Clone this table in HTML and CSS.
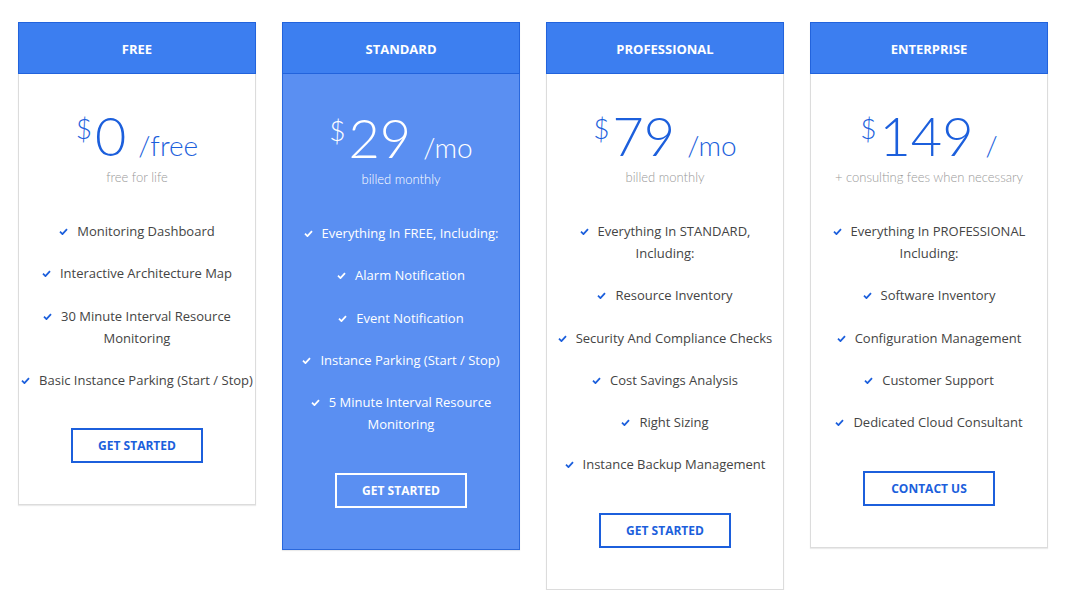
FILE: index.html
```html
<!DOCTYPE html>
<html lang="en">
<head>
<meta charset="UTF-8" />
<meta name="viewport" content="width=device-width, initial-scale=1" />
<title>Pricing</title>
<link rel="stylesheet" href="styles.css">
</head>
<body>

  <div class="plans">

    <div class="plan">
      <div class="plan-head">FREE</div>
      <div class="plan-body">
        <div class="price"><span class="currency">$</span><span class="amount">0</span><span class="period">/free</span></div>
        <div class="price-note">free for life</div>
        <ul class="features">
          <li><svg class="check" viewBox="0 0 10 8"><path d="M1 4.2 L3.8 7 L9 1.2"/></svg>Monitoring Dashboard</li>
          <li><svg class="check" viewBox="0 0 10 8"><path d="M1 4.2 L3.8 7 L9 1.2"/></svg>Interactive Architecture Map</li>
          <li><svg class="check" viewBox="0 0 10 8"><path d="M1 4.2 L3.8 7 L9 1.2"/></svg>30 Minute Interval Resource Monitoring</li>
          <li><svg class="check" viewBox="0 0 10 8"><path d="M1 4.2 L3.8 7 L9 1.2"/></svg>Basic Instance Parking (Start / Stop)</li>
        </ul>
        <a href="#" class="plan-btn">Get Started</a>
      </div>
    </div>

    <div class="plan featured">
      <div class="plan-head">STANDARD</div>
      <div class="plan-body">
        <div class="price"><span class="currency">$</span><span class="amount">29</span><span class="period">/mo</span></div>
        <div class="price-note">billed monthly</div>
        <ul class="features">
          <li><svg class="check" viewBox="0 0 10 8"><path d="M1 4.2 L3.8 7 L9 1.2"/></svg>Everything In FREE, Including:</li>
          <li><svg class="check" viewBox="0 0 10 8"><path d="M1 4.2 L3.8 7 L9 1.2"/></svg>Alarm Notification</li>
          <li><svg class="check" viewBox="0 0 10 8"><path d="M1 4.2 L3.8 7 L9 1.2"/></svg>Event Notification</li>
          <li><svg class="check" viewBox="0 0 10 8"><path d="M1 4.2 L3.8 7 L9 1.2"/></svg>Instance Parking (Start / Stop)</li>
          <li><svg class="check" viewBox="0 0 10 8"><path d="M1 4.2 L3.8 7 L9 1.2"/></svg>5 Minute Interval Resource Monitoring</li>
        </ul>
        <a href="#" class="plan-btn">Get Started</a>
      </div>
    </div>

    <div class="plan">
      <div class="plan-head">PROFESSIONAL</div>
      <div class="plan-body">
        <div class="price"><span class="currency">$</span><span class="amount">79</span><span class="period">/mo</span></div>
        <div class="price-note">billed monthly</div>
        <ul class="features">
          <li><svg class="check" viewBox="0 0 10 8"><path d="M1 4.2 L3.8 7 L9 1.2"/></svg>Everything In STANDARD,<br>Including:</li>
          <li><svg class="check" viewBox="0 0 10 8"><path d="M1 4.2 L3.8 7 L9 1.2"/></svg>Resource Inventory</li>
          <li><svg class="check" viewBox="0 0 10 8"><path d="M1 4.2 L3.8 7 L9 1.2"/></svg>Security And Compliance Checks</li>
          <li><svg class="check" viewBox="0 0 10 8"><path d="M1 4.2 L3.8 7 L9 1.2"/></svg>Cost Savings Analysis</li>
          <li><svg class="check" viewBox="0 0 10 8"><path d="M1 4.2 L3.8 7 L9 1.2"/></svg>Right Sizing</li>
          <li><svg class="check" viewBox="0 0 10 8"><path d="M1 4.2 L3.8 7 L9 1.2"/></svg>Instance Backup Management</li>
        </ul>
        <a href="#" class="plan-btn">Get Started</a>
      </div>
    </div>

    <div class="plan">
      <div class="plan-head">ENTERPRISE</div>
      <div class="plan-body">
        <div class="price"><span class="currency">$</span><span class="amount">149</span><span class="period">/</span></div>
        <div class="price-note">+ consulting fees when necessary</div>
        <ul class="features">
          <li><svg class="check" viewBox="0 0 10 8"><path d="M1 4.2 L3.8 7 L9 1.2"/></svg>Everything In PROFESSIONAL<br>Including:</li>
          <li><svg class="check" viewBox="0 0 10 8"><path d="M1 4.2 L3.8 7 L9 1.2"/></svg>Software Inventory</li>
          <li><svg class="check" viewBox="0 0 10 8"><path d="M1 4.2 L3.8 7 L9 1.2"/></svg>Configuration Management</li>
          <li><svg class="check" viewBox="0 0 10 8"><path d="M1 4.2 L3.8 7 L9 1.2"/></svg>Customer Support</li>
          <li><svg class="check" viewBox="0 0 10 8"><path d="M1 4.2 L3.8 7 L9 1.2"/></svg>Dedicated Cloud Consultant</li>
        </ul>
        <a href="#" class="plan-btn">Contact Us</a>
      </div>
    </div>

  </div>

</body>
</html>
```
FILE: styles.css
```css
* {
  box-sizing: border-box;
}
body {
  margin: 0;
  padding: 22px 0 0 18px;
  background: #fff;
  font-family: "Open Sans", "Noto Sans", sans-serif;
  color: #444;
}
.plans {
  display: flex;
  align-items: flex-start;
  gap: 26px;
}
.plan {
  width: 238px;
  background: #fff;
  border: 1px solid #dcdcdc;
  border-top: none;
  box-shadow: 0 1px 1px rgba(0,0,0,0.08);
}
.plan-head {
  height: 52px;
  padding-top: 1px;
  line-height: 50px;
  margin: 0 -1px;
  background: #3c7ef0;
  border: 1px solid #2263dc;
  color: #fff;
  font-size: 13px;
  font-weight: 700;
  text-align: center;
}
.plan-body {
  display: flex;
  flex-direction: column;
  align-items: center;
  padding: 39px 2px 41px;
}
.price {
  display: flex;
  align-items: baseline;
  height: 56px;
  color: #1c5fdc;
  font-family: "Lato", sans-serif;
  font-weight: 300;
  white-space: nowrap;
}
.currency {
  align-self: flex-start;
  margin-top: 1px;
  margin-right: 3px;
  font-size: 28px;
  line-height: 28px;
}
.amount {
  font-size: 54px;
  line-height: 46px;
}
.period {
  margin-left: 12px;
  font-size: 28px;
  line-height: 28px;
}
.price-note {
  font-family: "Lato", sans-serif;
  font-weight: 300;
  font-size: 13px;
  line-height: 16px;
  color: #999;
}
.features {
  list-style: none;
  margin: 35px 0 0;
  padding: 0;
  display: flex;
  flex-direction: column;
  gap: 20.3px;
  text-align: center;
  font-size: 13px;
  line-height: 22px;
}
.check {
  width: 9px;
  height: 7px;
  margin-right: 9px;
  fill: none;
  stroke: #1c5fdc;
  stroke-width: 2;
  vertical-align: 1px;
}
.plan-btn {
  display: block;
  width: 132px;
  height: 35px;
  line-height: 31px;
  margin-top: 37.5px;
  border: 2px solid #1c5fdc;
  color: #1c5fdc;
  font-size: 12px;
  font-weight: 700;
  text-align: center;
  text-decoration: none;
  text-transform: uppercase;
}

.featured {
  background: #5a8ff2;
  border-color: #2a68dc;
  border-top: none;
}
.featured .plan-head {
  background: #3d7ff0;
}
.featured .plan-body {
  padding-top: 41px;
}
.featured .price,
.featured .price-note,
.featured .features {
  color: #fff;
}
.featured .check {
  stroke: #fff;
}
.featured .plan-btn {
  border-color: #fff;
  color: #fff;
}
```
